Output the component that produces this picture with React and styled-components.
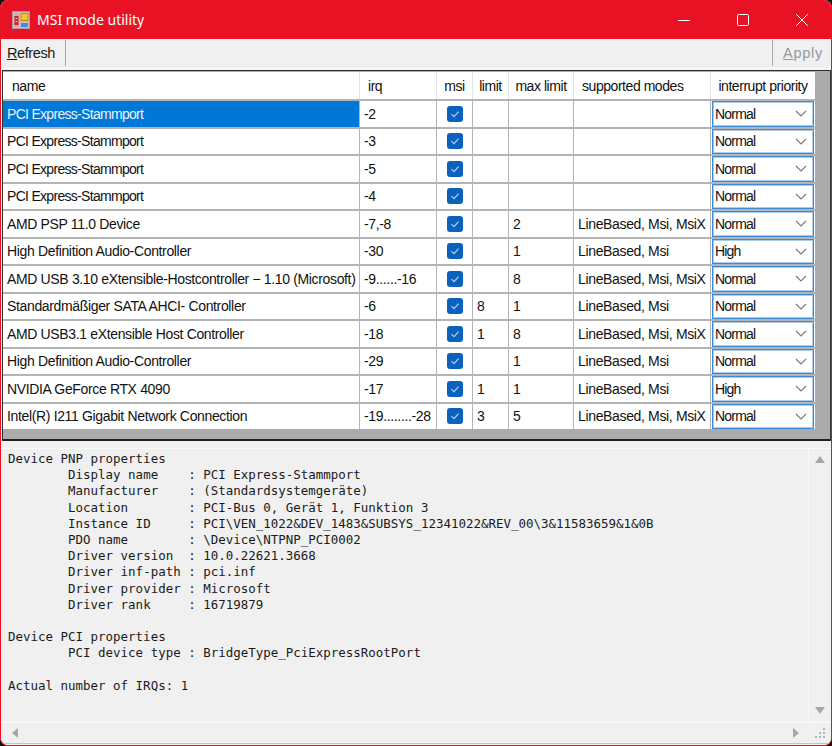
import styled, { createGlobalStyle } from "styled-components";

const devices = [
	{ name: "PCI Express-Stammport", tight: true, irq: "-2", limit: "", max: "", modes: "", priority: "Normal" },
	{ name: "PCI Express-Stammport", tight: true, irq: "-3", limit: "", max: "", modes: "", priority: "Normal" },
	{ name: "PCI Express-Stammport", tight: true, irq: "-5", limit: "", max: "", modes: "", priority: "Normal" },
	{ name: "PCI Express-Stammport", tight: true, irq: "-4", limit: "", max: "", modes: "", priority: "Normal" },
	{ name: "AMD PSP 11.0 Device", irq: "-7,-8", limit: "", max: "2", modes: "LineBased, Msi, MsiX", priority: "Normal" },
	{ name: "High Definition Audio-Controller", irq: "-30", limit: "", max: "1", modes: "LineBased, Msi", priority: "High" },
	{ name: "AMD USB 3.10 eXtensible-Hostcontroller \u2212 1.10 (Microsoft)", irq: "-9......-16", limit: "", max: "8", modes: "LineBased, Msi, MsiX", priority: "Normal" },
	{ name: "Standardm\u00e4\u00dfiger SATA AHCI- Controller", irq: "-6", limit: "8", max: "1", modes: "LineBased, Msi", priority: "Normal" },
	{ name: "AMD USB3.1 eXtensible Host Controller", irq: "-18", limit: "1", max: "8", modes: "LineBased, Msi, MsiX", priority: "Normal" },
	{ name: "High Definition Audio-Controller", irq: "-29", limit: "", max: "1", modes: "LineBased, Msi", priority: "Normal" },
	{ name: "NVIDIA GeForce RTX 4090", irq: "-17", limit: "1", max: "1", modes: "LineBased, Msi", priority: "High" },
	{ name: "Intel(R) I211 Gigabit Network Connection", irq: "-19........-28", limit: "3", max: "5", modes: "LineBased, Msi, MsiX", priority: "Normal" },
];

const details = `Device PNP properties
	Display name    : PCI Express-Stammport
	Manufacturer    : (Standardsystemger\u00e4te)
	Location        : PCI-Bus 0, Ger\u00e4t 1, Funktion 3
	Instance ID     : PCI\\VEN_1022&DEV_1483&SUBSYS_12341022&REV_00\\3&11583659&1&0B
	PDO name        : \\Device\\NTPNP_PCI0002
	Driver version  : 10.0.22621.3668
	Driver inf-path : pci.inf
	Driver provider : Microsoft
	Driver rank     : 16719879

Device PCI properties
	PCI device type : BridgeType_PciExpressRootPort

Actual number of IRQs: 1`;

const AppIcon = () => (
	<svg width="18" height="18" viewBox="0 0 18 18">
		<rect x="0.5" y="0.5" width="17" height="17" fill="#cdbfc0" stroke="#a89c9c" />
		<rect x="2" y="2" width="5" height="14" fill="#e0a0a4" />
		<rect x="2.5" y="5" width="4" height="9" fill="#c4282f" />
		<rect x="3.5" y="7" width="2" height="1" fill="#eec4c4" />
		<rect x="3.5" y="10" width="2" height="1" fill="#eec4c4" />
		<rect x="8.5" y="2" width="8" height="8" fill="#b58a2a" />
		<rect x="9.5" y="3" width="6" height="6" fill="#f6c81e" />
		<rect x="9" y="12" width="7" height="4" fill="#3f8fe8" />
	</svg>
);

const CheckBox = () => (
	<CheckMark>
		<svg width="10" height="10" viewBox="0 0 10 10">
			<path d="M1.5 5.2 L4 7.6 L8.6 2.6" fill="none" stroke="#b9d2ee" strokeWidth="1.1" />
		</svg>
	</CheckMark>
);

const Arrow = ({ points }) => (
	<svg width="12" height="12" viewBox="0 0 12 12">
		<polygon points={points} fill="#a6a6a6" />
	</svg>
);

const App = () => {
	return (
		<Window>
			<GlobalStyle />
			<TitleBar>
				<AppIcon />
				<Title>MSI mode utility</Title>
				<WindowButtons>
					<WindowButton>
						<svg width="12" height="12" viewBox="0 0 12 12">
							<path d="M0 6.5 H12" stroke="#fff" strokeWidth="1" />
						</svg>
					</WindowButton>
					<WindowButton>
						<svg width="12" height="12" viewBox="0 0 12 12">
							<rect x="0.5" y="0.5" width="11" height="11" rx="1" fill="none" stroke="#fff" strokeWidth="1" />
						</svg>
					</WindowButton>
					<WindowButton>
						<svg width="12" height="12" viewBox="0 0 12 12">
							<path d="M0.3 0.3 L11.7 11.7 M11.7 0.3 L0.3 11.7" stroke="#fff" strokeWidth="1" />
						</svg>
					</WindowButton>
				</WindowButtons>
			</TitleBar>
			<ToolBar>
				<RefreshButton>
					<u>R</u>efresh
				</RefreshButton>
				<ToolSeparator />
				<ToolSpacer />
				<ToolSeparator />
				<ApplyButton>
					<u>A</u>pply
				</ApplyButton>
			</ToolBar>
			<GridArea>
				<HeaderRow>
					<HeaderCell $pad={9}>name</HeaderCell>
					<HeaderCell $pad={8}>irq</HeaderCell>
					<HeaderCell $center>msi</HeaderCell>
					<HeaderCell $center>limit</HeaderCell>
					<HeaderCell $center>max limit</HeaderCell>
					<HeaderCell $pad={8}>supported modes</HeaderCell>
					<HeaderCell $center>interrupt priority</HeaderCell>
				</HeaderRow>
				{devices.map((device, index) => (
					<Row key={index}>
						<Cell $selected={index === 0} $tight={device.tight}>
							{device.name}
						</Cell>
						<Cell>{device.irq}</Cell>
						<CheckCell>
							<CheckBox />
						</CheckCell>
						<Cell>{device.limit}</Cell>
						<Cell>{device.max}</Cell>
						<Cell>{device.modes}</Cell>
						<ComboCell>
							<Combo>
								{device.priority}
								<svg width="12" height="7" viewBox="0 0 12 7">
									<path d="M1 1 L6 6 L11 1" fill="none" stroke="#777" strokeWidth="1.1" />
								</svg>
							</Combo>
						</ComboCell>
					</Row>
				))}
			</GridArea>
			<DetailArea>
				<DetailBody>
					<DetailText>{details}</DetailText>
					<VScroll>
						<Arrow points="1,9 6,2 11,9" />
						<Arrow points="1,2 11,2 6,9" />
					</VScroll>
				</DetailBody>
				<HScroll>
					<Arrow points="9,1 9,11 3,6" />
					<HScrollEnd>
						<Arrow points="3,1 3,11 9,6" />
						<Grip>
							<svg width="11" height="11" viewBox="0 0 11 11">
								<path d="M8 0h2v2H8z M8 4h2v2H8z M4 4h2v2H4z M8 8h2v2H8z M4 8h2v2H4z M0 8h2v2H0z" fill="#b4b4b4" />
							</svg>
						</Grip>
					</HScrollEnd>
				</HScroll>
			</DetailArea>
		</Window>
	);
};
export default App;

const GlobalStyle = createGlobalStyle`
	html, body {
		margin: 0;
		padding: 0;
		background: #16110f;
	}
`;

const Window = styled.div`
	box-sizing: border-box;
	width: 832px;
	height: 746px;
	display: flex;
	flex-direction: column;
	background: #f0f0f0;
	border: 1px solid #e81224;
	border-top: none;
	border-radius: 8px;
	overflow: hidden;
	font-family: "Liberation Sans", Arial, sans-serif;
`;

const TitleBar = styled.div`
	flex: 0 0 39px;
	display: flex;
	align-items: center;
	gap: 7px;
	padding-left: 11px;
	background: #e81224;
`;

const Title = styled.span`
	color: #fff;
	font-family: "Noto Sans", sans-serif;
	font-size: 14px;
`;

const WindowButtons = styled.div`
	margin-left: auto;
	display: flex;
`;

const WindowButton = styled.div`
	width: 59px;
	height: 39px;
	display: flex;
	align-items: center;
	justify-content: center;
	svg {
		display: block;
	}
`;

const ToolBar = styled.div`
	flex: 0 0 30px;
	box-sizing: border-box;
	display: flex;
	align-items: center;
	padding-bottom: 2px;
	background: #f0f0f0;
	border-bottom: 1px solid #fdfdfd;
`;

const ToolButton = styled.div`
	font-size: 14.5px;
`;

const RefreshButton = styled(ToolButton)`
	padding: 0 10px 0 6px;
	letter-spacing: -0.4px;
	color: #1a1a1a;
`;

const ApplyButton = styled(ToolButton)`
	padding: 0 8px 0 10px;
	letter-spacing: 0.75px;
	color: #8f9aa4;
`;

const ToolSeparator = styled.div`
	width: 1px;
	height: 26px;
	background: #a8a8a8;
`;

const ToolSpacer = styled.div`
	flex: 1;
`;

const GridArea = styled.div`
	flex: 0 0 371px;
	box-sizing: border-box;
	margin: 1px 0 0 1px;
	padding: 1px 0 0;
	background: #ababab;
	border-top: 1px solid #333;
	border-bottom: 2px solid #222;
	border-left: 1px solid #333;
	border-right: 1px solid #333;
	font-size: 14px;
	letter-spacing: -0.35px;
	color: #111;
`;

const columns = "356px 76px 35px 35px 64px 136px 104px";

const HeaderRow = styled.div`
	display: grid;
	grid-template-columns: ${columns};
	column-gap: 1px;
	width: 812px;
	height: 27px;
	background: #e4e4e4;
`;

const HeaderCell = styled.div`
	display: flex;
	align-items: center;
	justify-content: ${(props) => (props.$center ? "center" : "flex-start")};
	padding-left: ${(props) => props.$pad || 0}px;
	background: #fff;
	white-space: nowrap;
	letter-spacing: -0.45px;
`;

const Row = styled.div`
	display: grid;
	grid-template-columns: ${columns};
	column-gap: 1px;
	width: 812px;
	height: 27.5px;
	box-sizing: border-box;
	padding-top: 2px;
	background: #b4b4b4;
`;

const Cell = styled.div`
	display: flex;
	align-items: center;
	padding-left: 4px;
	white-space: nowrap;
	overflow: hidden;
	letter-spacing: ${(props) => (props.$tight ? "-0.7px" : "inherit")};
	background: ${(props) => (props.$selected ? "#0078d7" : "#fff")};
	color: ${(props) => (props.$selected ? "#e6f1fb" : "#111")};
`;

const CheckCell = styled(Cell)`
	justify-content: center;
	padding-left: 0;
`;

const CheckMark = styled.span`
	width: 16px;
	height: 16px;
	display: flex;
	align-items: center;
	justify-content: center;
	border-radius: 3px;
	background: #0a62bd;
`;

const ComboCell = styled(Cell)`
	padding: 0 1px;
`;

const Combo = styled.div`
	flex: 1;
	box-sizing: border-box;
	height: 25.5px;
	display: flex;
	align-items: center;
	justify-content: space-between;
	padding: 0 6px 0 2px;
	letter-spacing: -0.8px;
	background: #fff;
	border: 1px solid #3a8ad8;
	box-shadow: inset 0 0 0 1px #a9cdf0;
`;

const DetailArea = styled.div`
	flex: 1;
	display: flex;
	flex-direction: column;
	min-height: 0;
	padding-top: 7px;
	background: #f0f0f0;
`;

const DetailBody = styled.div`
	flex: 1;
	display: flex;
	min-height: 0;
	border-top: 1px solid #fafafa;
`;

const DetailText = styled.pre`
	flex: 1;
	margin: 0;
	padding: 2px 0 0 7px;
	font-family: "DejaVu Sans Mono", monospace;
	font-size: 12.47px;
	line-height: 16.2px;
	tab-size: 8;
	color: #1a1a1a;
	border-right: 1px solid #fafafa;
`;

const VScroll = styled.div`
	width: 22px;
	display: flex;
	flex-direction: column;
	justify-content: space-between;
	align-items: center;
	padding: 5px 0;
	box-sizing: border-box;
`;

const HScroll = styled.div`
	flex: 0 0 22px;
	box-sizing: border-box;
	display: flex;
	align-items: center;
	justify-content: space-between;
	padding: 0 5px 0 8px;
	margin-bottom: 1px;
	border-top: 1px solid #fafafa;
	border-bottom: 1px solid #c4c4c4;
`;

const HScrollEnd = styled.div`
	display: flex;
	align-items: center;
	gap: 13px;
`;

const Grip = styled.div`
	width: 11px;
	height: 11px;
	svg {
		display: block;
	}
`;
